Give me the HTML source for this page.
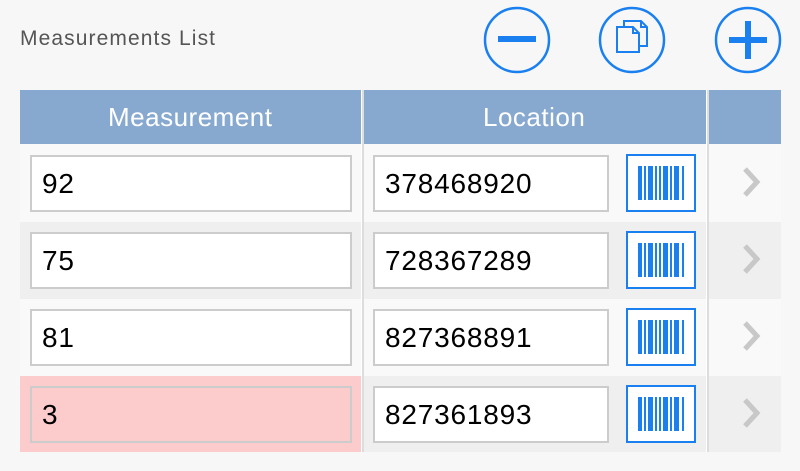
<!DOCTYPE html>
<html><head><style>
body{margin:0;width:800px;height:471px;background:#f7f7f7;font-family:"Liberation Sans",sans-serif;position:relative;overflow:hidden}
.a{position:absolute}
.title{left:20px;top:27px;font-size:21px;color:#555;letter-spacing:1.1px}
.hdr{left:20px;top:90px;width:761px;height:54px;background:#87a9d0}
.ht{color:#fff;font-size:26px;top:102px;letter-spacing:0.5px}
.row{left:20px;width:761px}
.inp{background:#fff;border:2px solid #ccc;box-sizing:border-box;font-size:28px;color:#000;padding-left:10px;line-height:54px;letter-spacing:0.8px}
.vl{width:2px;background:#ddd;top:90px;height:362px}
</style></head><body>
<div class="a title">Measurements List</div>
<svg class="a" style="left:0;top:0" width="800" height="80">
<g fill="none" stroke="#1a80f0" stroke-width="2.5">
<circle cx="517" cy="40" r="32"/><circle cx="632" cy="40" r="32"/><circle cx="748" cy="40" r="32"/>
</g>
<rect x="498" y="36" width="38" height="6" fill="#1a80f0"/>
<rect x="729" y="37" width="38" height="6" fill="#1a80f0"/>
<rect x="745" y="21" width="6" height="38" fill="#1a80f0"/>
<g fill="none" stroke="#1a80f0" stroke-width="2">
<path d="M624 21h17l6 6v19h-23z"/><path d="M641 21v6h6"/><path d="M617 27h16l6 6v19h-22z" fill="#f7f7f7"/><path d="M633 27v6h6"/>
</g>
</svg>
<div class="a hdr"></div>
<div class="a ht" style="left:108px">Measurement</div>
<div class="a ht" style="left:483px">Location</div>

<div class="a row" style="top:144px;height:78px;background:#f9f9f9"></div>
<div class="a row" style="top:222px;height:77px;background:#efefef"></div>
<div class="a row" style="top:299px;height:77px;background:#f9f9f9"></div>
<div class="a row" style="top:376px;height:76px;background:#efefef"></div>
<div class="a" style="left:20px;top:376px;width:342px;height:76px;background:#fccccc"></div>

<div class="a vl" style="left:361px;background:#fff;width:1px"></div>
<div class="a vl" style="left:362px"></div>
<div class="a vl" style="left:706px;background:#fff;width:1px"></div>
<div class="a vl" style="left:707px"></div>

<div class="a inp" style="left:30px;top:155px;width:322px;height:57px">92</div>
<div class="a inp" style="left:30px;top:232px;width:322px;height:57px">75</div>
<div class="a inp" style="left:30px;top:309px;width:322px;height:57px">81</div>
<div class="a inp" style="left:30px;top:386px;width:322px;height:57px;background:#fccccc">3</div>

<div class="a inp" style="left:373px;top:155px;width:236px;height:57px">378468920</div>
<div class="a inp" style="left:373px;top:232px;width:236px;height:57px">728367289</div>
<div class="a inp" style="left:373px;top:309px;width:236px;height:57px">827368891</div>
<div class="a inp" style="left:373px;top:386px;width:236px;height:57px">827361893</div>

<svg class="a" style="left:0;top:0" width="800" height="471">
<defs><g id="b">
<rect x="1" y="1" width="68" height="56" fill="#fff" stroke="#1a80f0" stroke-width="2"/>
<g fill="#1a80f0">
<rect x="12" y="12" width="4" height="34"/><rect x="18" y="12" width="2" height="34"/><rect x="22" y="12" width="5" height="34"/><rect x="29" y="12" width="2" height="34"/><rect x="33" y="12" width="2" height="34"/><rect x="37" y="12" width="5" height="34"/><rect x="44" y="12" width="2" height="34"/><rect x="48" y="12" width="5" height="34"/><rect x="56" y="12" width="2" height="34"/>
</g>
<path d="M119 15l12 13-12 13" fill="none" stroke="#c8c8c8" stroke-width="5"/>
</g></defs>
<use href="#b" x="626" y="154"/><use href="#b" x="626" y="231"/><use href="#b" x="626" y="308"/><use href="#b" x="626" y="385"/>
</svg>
</body></html>
